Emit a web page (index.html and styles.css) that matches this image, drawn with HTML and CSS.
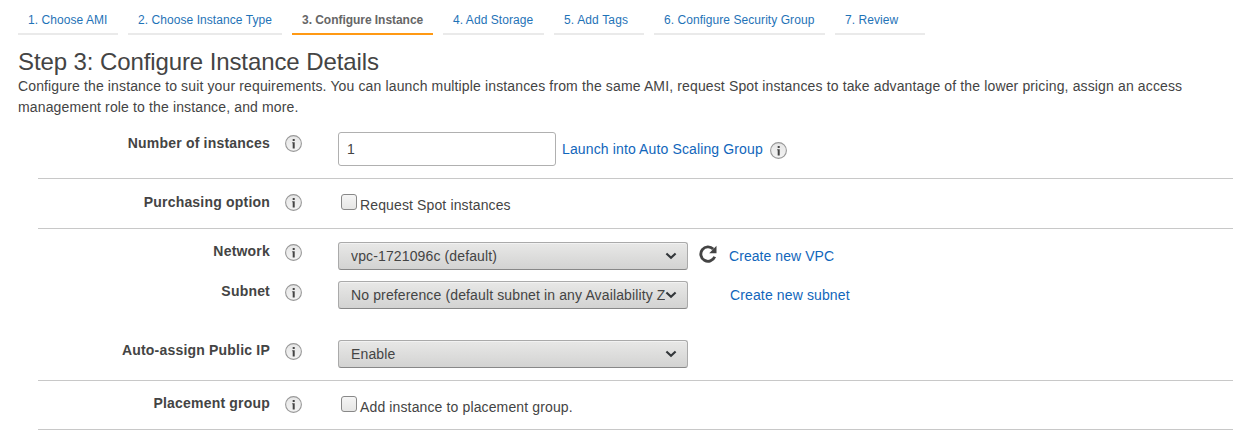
FILE: index.html
```html
<!DOCTYPE html>
<html lang="en">
<head>
<meta charset="utf-8">
<title>Configure Instance Details</title>
<link rel="stylesheet" href="styles.css">
</head>
<body>
<svg width="0" height="0" class="defs">
  <defs>
    <linearGradient id="infoFill" x1="0" y1="0" x2="0" y2="1"><stop offset="0" stop-color="#e6e6e6"/><stop offset="1" stop-color="#f3f3f3"/></linearGradient>
    <symbol id="info" viewBox="0 0 17 17">
      <circle cx="8.5" cy="8.5" r="7.9" fill="url(#infoFill)" stroke="#999" stroke-width="1.1"/>
      <path d="M7.700 4h2v2h-2zM7.200 7.200h2.500v6.300H7.700V8.200h-.5z" fill="#444"/>
    </symbol>
    <symbol id="chevron" viewBox="0 0 12 8"><path d="M1.4 1.4 6 5.8l4.600-4.400" fill="none" stroke="#33373a" stroke-width="2.100"/></symbol>
  </defs>
</svg>
<nav class="steps">
  <a class="step">1. Choose AMI</a>
  <a class="step type">2. Choose Instance Type</a>
  <a class="step active">3. Configure Instance</a>
  <a class="step storage">4. Add Storage</a>
  <a class="step tags">5. Add Tags</a>
  <a class="step security">6. Configure Security Group</a>
  <a class="step review">7. Review</a>
</nav>
<header class="intro">
  <h1>Step 3: Configure Instance Details</h1>
  <p>Configure the instance to suit your requirements. You can launch multiple instances from the same AMI, request Spot instances to take advantage of the lower pricing, assign an access management role to the instance, and more.</p>
</header>
<main class="form">
  <section class="group count">
    <div class="row">
      <label class="label">Number of instances</label>
      <svg class="info"><use href="#info"/></svg>
      <div class="control">
        <div class="input">1</div>
        <a class="link launch">Launch into Auto Scaling Group</a>
        <svg class="info inline"><use href="#info"/></svg>
      </div>
    </div>
  </section>
  <section class="group purchasing">
    <div class="row">
      <label class="label">Purchasing option</label>
      <svg class="info"><use href="#info"/></svg>
      <div class="control check"><span class="box"></span><span class="check-text">Request Spot instances</span></div>
    </div>
  </section>
  <section class="group network">
    <div class="row vpc">
      <label class="label">Network</label>
      <svg class="info"><use href="#info"/></svg>
      <div class="control">
        <div class="select"><span class="value">vpc-1721096c (default)</span><svg class="chevron"><use href="#chevron"/></svg></div>
        <svg class="refresh" viewBox="0 0 18 18"><path d="M14.200 4.100A7.200 7.200 0 1 0 15.700 11.800" fill="none" stroke="#444" stroke-width="2.900"/><path d="M17.500.8v7.400h-7.300z" fill="#444"/></svg>
        <a class="link">Create new VPC</a>
      </div>
    </div>
    <div class="row subnet">
      <label class="label">Subnet</label>
      <svg class="info"><use href="#info"/></svg>
      <div class="control">
        <div class="select"><span class="value">No preference (default subnet in any Availability Z</span><svg class="chevron"><use href="#chevron"/></svg></div>
        <a class="link new-subnet">Create new subnet</a>
      </div>
    </div>
    <div class="row">
      <label class="label">Auto-assign Public IP</label>
      <svg class="info"><use href="#info"/></svg>
      <div class="control">
        <div class="select"><span class="value">Enable</span><svg class="chevron"><use href="#chevron"/></svg></div>
      </div>
    </div>
  </section>
  <section class="group placement">
    <div class="row">
      <label class="label">Placement group</label>
      <svg class="info"><use href="#info"/></svg>
      <div class="control check"><span class="box"></span><span class="check-text">Add instance to placement group.</span></div>
    </div>
  </section>
</main>
</body>
</html>
```
FILE: styles.css
```css
* { box-sizing: border-box; }
body { margin: 0; height: 440px; overflow: hidden; background: #fff; color: #444; font: 14px/21px "Liberation Sans", Arial, sans-serif; }
svg { display: block; flex: none; }
.defs { position: absolute; }
.steps { display: flex; gap: 10px; padding: 5px 18px 0; }
.step { width: 100px; height: 30px; padding: 0 0 0 10px; border-bottom: 2px solid #eaeaea; color: #1f73b7; font-size: 12px; line-height: 30px; letter-spacing: .06px; white-space: nowrap; }
.step.type { width: 154px; }
.step.active { width: 141px; border-color: #ff9914; color: #666; font-weight: bold; letter-spacing: -.04px; }
.step.storage { width: 101px; }
.step.tags { width: 90px; letter-spacing: .15px; }
.step.security { width: 171px; }
.step.review { width: 90px; }
.intro { padding: 12px 45px 0 18px; }
h1 { margin: 0; font-size: 24px; font-weight: normal; line-height: 29px; letter-spacing: -.1px; }
.intro p { margin: 0; letter-spacing: .137px; }
.form { margin: 0 13px 0 38px; padding-top: 3px; }
.group { border-bottom: 1px solid #c8c8c8; letter-spacing: .13px; }
.count { height: 58px; padding-top: 11px; }
.purchasing { height: 50px; padding-top: 12px; }
.network { height: 152px; padding-top: 11px; }
.placement { height: 49px; padding-top: 11px; }
.row { display: grid; grid-template-columns: 232px 17px 1fr; column-gap: 15px; align-items: start; }
.label { padding-top: 1px; text-align: right; font-weight: bold; line-height: 20px; letter-spacing: .2px; }
.info { width: 17px; height: 17px; margin-top: 3px; }
.control { display: flex; align-items: center; padding-left: 21px; }
.input { width: 218px; height: 34px; padding: 0 8px; border: 1px solid #b0b0b0; border-radius: 3px; line-height: 32px; }
.link { color: #1166bb; white-space: nowrap; }
.launch { margin-left: 6px; }
.info.inline { margin: 3px 0 0 7px; }
.check { padding: 3px 0 0 24px; align-items: flex-start; }
.box { width: 16px; height: 16px; border: 1px solid #888; border-radius: 3px; background: linear-gradient(#f5f5f5, #e6e6e5); }
.check-text { margin: 1px 0 0 3px; letter-spacing: .13px; }
.network .info, .placement .info { margin-top: 4px; }
.placement .check { padding-top: 4px; }
.vpc { height: 40px; }
.vpc .control { padding-top: 2px; }
.vpc .link { letter-spacing: .06px; }
.subnet { height: 59px; }
.network .row:not(.vpc) .control { padding-top: 1px; }
.select { display: flex; align-items: center; width: 350px; height: 28px; padding: 0 10px 0 12px; border: 1px solid #aaa; border-bottom-color: #888; border-radius: 3px; background: linear-gradient(#e8e8e7, #d3d3d2); box-shadow: inset 0 1px #f2f2f2; }
.value { width: 314px; overflow: hidden; white-space: nowrap; }
.chevron { width: 12px; height: 8px; }
.refresh { width: 18px; height: 18px; margin: 0 12px 4px 11px; }
.new-subnet { margin-left: 42px; }
```
